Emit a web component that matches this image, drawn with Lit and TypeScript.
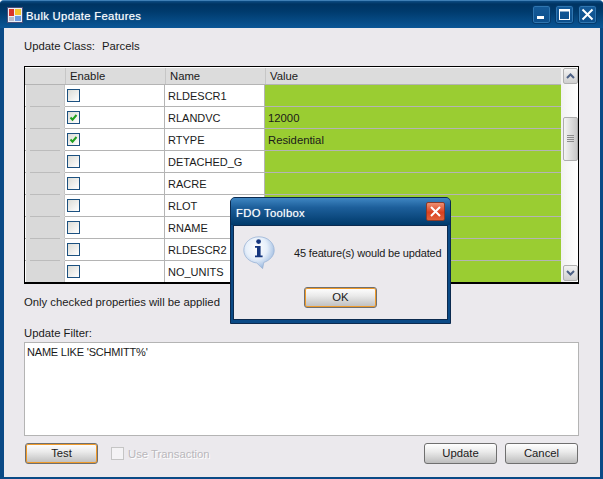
import { LitElement, html, css, svg } from "lit";
import { customElement } from "lit/decorators.js";

const ROWS = [
  { on: false, name: "RLDESCR1", value: "" },
  { on: true, name: "RLANDVC", value: "12000" },
  { on: true, name: "RTYPE", value: "Residential" },
  { on: false, name: "DETACHED_G", value: "" },
  { on: false, name: "RACRE", value: "" },
  { on: false, name: "RLOT", value: "" },
  { on: false, name: "RNAME", value: "" },
  { on: false, name: "RLDESCR2", value: "" },
  { on: false, name: "NO_UNITS", value: "" },
];

const appIcon = svg`<svg width="16" height="16" viewBox="0 0 16 16">
  <rect x="0.5" y="0.5" width="15" height="15" fill="#e8eef6" stroke="#4a4f7a"/>
  <rect x="2" y="2" width="5" height="7" fill="#d8342a"/>
  <rect x="8" y="2" width="6" height="6" fill="#f5c52e"/>
  <rect x="2" y="10" width="5" height="4" fill="#b9b9c9"/>
  <rect x="8" y="9" width="6" height="5" fill="#6d9be0"/>
</svg>`;

const infoIcon = svg`<svg width="32" height="33" viewBox="0 0 32 33">
  <defs><radialGradient id="bub" cx="0.42" cy="0.35" r="0.7">
    <stop offset="0" stop-color="#ffffff"/><stop offset="0.5" stop-color="#e6effa"/><stop offset="0.85" stop-color="#a9c3e4"/><stop offset="1" stop-color="#7f9fca"/>
  </radialGradient></defs>
  <path d="M16 0.8C7.4 0.8 0.8 6.8 0.8 14.2c0 6.4 5.2 11.8 13 12.8L19.6 32.6l1.2-6.2C27 24.4 31.2 19.6 31.2 14.2 31.2 6.8 24.6 0.8 16 0.8Z" fill="url(#bub)" stroke="#9ab4d6" stroke-width="0.8"/>
  <circle cx="15.6" cy="5.6" r="2.4" fill="#16377f"/>
  <path d="M12 10h5.6v9.4h2v1.8h-7.6v-1.8h2v-7.6h-2Z" fill="#16377f"/>
</svg>`;

@customElement("app-root")
export class AppRoot extends LitElement {
  static styles = css`
    :host {
      display: block;
      width: 603px;
      height: 479px;
      position: relative;
      overflow: hidden;
      background: #ffffff;
      font-family: "Liberation Sans", Arial, sans-serif;
      font-size: 11.3px;
      color: #1a1a1a;
    }
    .window {
      height: 479px;
      display: flex;
      flex-direction: column;
      box-sizing: border-box;
      padding: 0 3px 2px 4px;
      border-top: 1px solid #3f7fb5;
      border-radius: 4px 4px 0 0;
      background: #0a4a86;
      overflow: hidden;
    }
    .titlebar {
      height: 27px;
      margin: 0 -3px 0 -4px;
      padding: 0 6px 0 7px;
      display: flex;
      align-items: center;
      gap: 3px;
      flex: none;
      background: linear-gradient(#0c4c84 0, #003462 3px, #003a6c 10px, #0a5696 27px);
      color: #fff;
    }
    .titlebar span { flex: 1; padding-top: 2px; letter-spacing: 0.3px; text-shadow: 0 0 1px #ffffff88; }
    .titlebar svg { flex: none; }
    .ctrls { display: flex; gap: 4px; }
    .ctrl {
      width: 19px;
      height: 19px;
      box-sizing: border-box;
      border: 1px solid #043a6c;
      border-radius: 3px;
      background: linear-gradient(#155a98, #0c4f8c);
      box-shadow: inset 0 0 0 1px #2f76b0;
      display: flex;
      align-items: center;
      justify-content: center;
    }
    .client {
      flex: 1;
      background: #ebe9ed;
      padding: 11px 21px 0 20px;
      display: flex;
      flex-direction: column;
      min-height: 0;
    }
    .label { line-height: 14px; height: 14px; }
    .class-row { display: flex; gap: 7px; height: 14px; line-height: 14px; margin-bottom: 13px; }
    .grid {
      flex: none;
      height: 218px;
      box-sizing: border-box;
      border: 1px solid #000;
      border-bottom-width: 2px;
      background: #fff;
      display: flex;
      overflow: hidden;
    }
    .cells { flex: 1; padding-top: 1px; min-width: 0; }
    .head, .row { display: grid; grid-template-columns: 39px 100px 100px 1fr; }
    .head {
      height: 16px;
      line-height: 16px;
      padding-left: 1px;
      background: #dcdcdc;
      border-bottom: 1px solid #b4b4b4;
    }
    .head div { padding-left: 4px; border-left: 1px solid #c6c6c6; }
    .head div:first-child { border-left: 0; }
    .row {
      grid-template-rows: 21px;
      height: 21px;
      padding-left: 1px;
      border-bottom: 1px solid #b4b4b4;
      background: #fff;
    }
    .row > div { line-height: 22px; padding-left: 3px; }
    .row .rh {
      padding: 0;
      background: #d9d9d9;
      position: relative;
      border-right: 1px solid #c4c4c4;
      box-shadow: 0 1px 0 #d9d9d9;
    }
    .rh::after {
      content: "";
      position: absolute;
      left: 4px;
      right: 4px;
      bottom: -1px;
      height: 1px;
      background: #bcbcbc;
      z-index: 1;
    }
    .row:last-child .rh::after { display: none; }
    .row .chk { border-right: 1px solid #b4b4b4; display: flex; align-items: center; padding-left: 2px; }
    .name { border-right: 1px solid #b4b4b4; font-size: 11px; }
    .value { background: #9acd32; }
    .box {
      width: 13px;
      height: 13px;
      box-sizing: border-box;
      border: 1px solid #1c5180;
      background: linear-gradient(135deg, #dcdcd6, #ffffff);
      display: flex;
      flex: none;
    }
    .box.off { border-color: #c5c5c5; background: #f4f3f5; }
    .scroll {
      width: 17px;
      flex: none;
      background: linear-gradient(90deg, #f1f1f1, #ffffff);
      display: flex;
      flex-direction: column;
      align-items: flex-end;
      padding: 1px 0;
      box-sizing: border-box;
    }
    .sbtn {
      width: 15px;
      height: 16px;
      box-sizing: border-box;
      border: 1px solid #b0b0b0;
      border-radius: 2px;
      background: linear-gradient(#f2f2f2, #cfcfcf);
      display: flex;
      align-items: center;
      justify-content: center;
      flex: none;
    }
    .thumb {
      width: 15px;
      height: 44px;
      box-sizing: border-box;
      margin-top: 33px;
      border: 1px solid #adadad;
      border-radius: 2px;
      background: linear-gradient(90deg, #f4f4f4, #c9c9c9);
      display: flex;
      align-items: center;
      justify-content: center;
      flex: none;
    }
    .thumb i {
      display: block;
      width: 7px;
      height: 7px;
      border-top: 1px solid #8c8c8c;
      background: repeating-linear-gradient(transparent 0 1px, #8c8c8c 1px 2px);
    }
    .spacer { flex: 1; }
    .note { margin-top: 11px; }
    .filter-label { margin-top: 17px; margin-bottom: 2px; }
    .filter {
      height: 94px;
      flex: none;
      box-sizing: border-box;
      border: 1px solid #b4b4b4;
      background: #fff;
      padding: 2px 2px;
      line-height: 14px;
      font-size: 11px;
      letter-spacing: -0.2px;
    }
    .actions { margin-top: 7px; display: flex; align-items: center; padding: 0 1px; }
    .btn {
      height: 21px;
      width: 73px;
      box-sizing: border-box;
      padding-bottom: 1px;
      border: 1px solid #6f6f6f;
      border-radius: 3px;
      background: linear-gradient(#ffffff, #ebebeb 40%, #bdbdbd);
      display: flex;
      align-items: center;
      justify-content: center;
      flex: none;
    }
    .btn.focus { box-shadow: inset 0 0 0 1px #ef9a2a; }
    .use { display: flex; align-items: center; gap: 4px; margin-left: 13px; color: #b9b7bb; text-shadow: 1px 1px 0 #fff; }
    .ends { margin-left: auto; display: flex; gap: 8px; }
    .dialog {
      position: absolute;
      left: 230px;
      top: 197px;
      width: 221px;
      height: 127px;
      box-sizing: border-box;
      border: 1px solid #0b2a4f;
      border-radius: 5px 5px 0 0;
      background: #0a4a86;
      padding: 0 2px 3px;
      display: flex;
      flex-direction: column;
    }
    .dlg-title {
      height: 27px;
      margin: 0 -2px;
      flex: none;
      display: flex;
      align-items: center;
      padding: 0 5px;
      border-radius: 4px 4px 0 0;
      background: linear-gradient(#3f86c2, #1d5f9b 35%, #003a6b);
      color: #fff;
      letter-spacing: 0.3px;
    }
    .dlg-title span { flex: 1; padding-top: 2px; text-shadow: 0 0 1px #ffffff88; }
    .dlg-close {
      width: 19px;
      height: 19px;
      box-sizing: border-box;
      border: 1px solid #8a3a28;
      border-radius: 2px;
      background: linear-gradient(#ee8f72, #d9401f 55%, #e2613a);
      display: flex;
      align-items: center;
      justify-content: center;
    }
    .dlg-body {
      flex: 1;
      background: #ebe9ed;
      border: 1px solid #0b2a4f;
      display: flex;
      flex-direction: column;
      align-items: center;
    }
    .dlg-msg { align-self: stretch; display: flex; align-items: flex-start; padding: 10px 0 0 9px; height: 33px; white-space: nowrap; }
    .dlg-msg span { margin: 10px 0 0 19px; line-height: 14px; font-size: 11px; letter-spacing: -0.16px; }
    .dlg-msg svg { flex: none; }
    .dlg-body .btn { margin-top: 18px; }
  `;

  render() {
    return html`
      <div class="window">
        <div class="titlebar">
          ${appIcon}
          <span>Bulk Update Features</span>
          <div class="ctrls">
            <div class="ctrl"><svg width="11" height="11"><rect x="1" y="7" width="7" height="3" fill="#fff"/></svg></div>
            <div class="ctrl"><svg width="13" height="13"><path d="M1 1h11v11H1Z M2 3.5v7.5h9V3.5Z" fill="#fff" fill-rule="evenodd"/></svg></div>
            <div class="ctrl"><svg width="13" height="13"><path d="M1.5 1.5l10 10M11.5 1.5l-10 10" stroke="#fff" stroke-width="2" fill="none"/></svg></div>
          </div>
        </div>
        <div class="client">
          <div class="class-row"><span>Update Class:</span><span>Parcels</span></div>
          <div class="grid">
            <div class="cells">
              <div class="head"><div></div><div>Enable</div><div>Name</div><div>Value</div></div>
              ${ROWS.map((r) => html`
                <div class="row">
                  <div class="rh"></div>
                  <div class="chk">
                    <div class="box">
                      ${r.on ? svg`<svg width="11" height="11" viewBox="0 0 11 11"><path d="M2.5 5.5l2 2.2 4-4.7" stroke="#21a121" stroke-width="2" fill="none"/></svg>` : ""}
                    </div>
                  </div>
                  <div class="name">${r.name}</div>
                  <div class="value">${r.value}</div>
                </div>`)}
            </div>
            <div class="scroll">
              <div class="sbtn"><svg width="9" height="6"><path d="M1 5l3.5-3.5L8 5" stroke="#4d6185" stroke-width="2" fill="none"/></svg></div>
              <div class="thumb"><i></i></div>
              <div class="spacer"></div>
              <div class="sbtn"><svg width="9" height="6"><path d="M1 1l3.5 3.5L8 1" stroke="#4d6185" stroke-width="2" fill="none"/></svg></div>
            </div>
          </div>
          <div class="label note">Only checked properties will be applied</div>
          <div class="label filter-label">Update Filter:</div>
          <div class="filter">NAME LIKE 'SCHMITT%'</div>
          <div class="actions">
            <div class="btn focus">Test</div>
            <div class="use"><div class="box off"></div>Use Transaction</div>
            <div class="ends"><div class="btn">Update</div><div class="btn">Cancel</div></div>
          </div>
        </div>
      </div>
      <div class="dialog">
        <div class="dlg-title">
          <span>FDO Toolbox</span>
          <div class="dlg-close"><svg width="13" height="13"><path d="M2 2l9 9M11 2l-9 9" stroke="#fff" stroke-width="2" fill="none"/></svg></div>
        </div>
        <div class="dlg-body">
          <div class="dlg-msg">${infoIcon}<span>45 feature(s) would be updated</span></div>
          <div class="btn focus">OK</div>
        </div>
      </div>
    `;
  }
}
